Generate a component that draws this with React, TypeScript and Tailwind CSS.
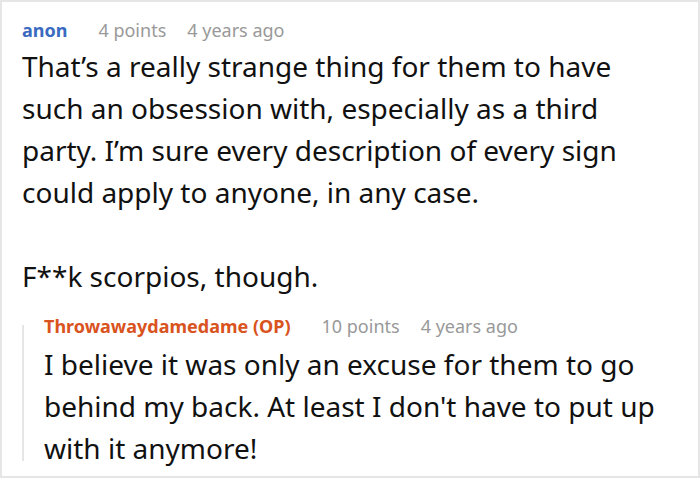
import React from 'react';

const font = {
  fontFamily: '"Noto Sans", "Open Sans", sans-serif',
};

type CommentProps = {
  author: string;
  authorClass: string;
  points: string;
  age: string;
  children: React.ReactNode;
};

const CommentHeader: React.FC<Omit<CommentProps, 'children'>> = ({
  author,
  authorClass,
  points,
  age,
}) => (
  <div className="flex items-baseline text-[18px] leading-[24px]">
    <span className={`font-bold ${authorClass}`}>{author}</span>
    <span className="ml-[31px] text-[#999999]">{points}</span>
    <span className="ml-[21px] text-[#999999]">{age}</span>
  </div>
);

export default function App() {
  return (
    <div
      style={font}
      className="w-[700px] h-[478px] bg-white border-2 border-[#e6e6e6] overflow-hidden"
    >
      <div className="pl-[20px] pt-[16px]">
        <CommentHeader
          author="anon"
          authorClass="text-[#3a6bc1]"
          points="4 points"
          age="4 years ago"
        />

        <div className="mt-[3px] text-[28px] leading-[42px] text-[#111111]">
          <p>
            That’s a really strange thing for them to have
            <br />
            such an obsession with, especially as a third
            <br />
            party. I’m sure every description of every sign
            <br />
            could apply to anyone, in any case.
          </p>
          <p className="mt-[42px]">F**k scorpios, though.</p>
        </div>

        <div className="mt-[17px] flex">
          <div className="w-[2px] mt-[11px] mb-[8px] bg-[#e6e6e6]" />

          <div className="pl-[20px]">
            <CommentHeader
              author="Throwawaydamedame (OP)"
              authorClass="text-[#d9531e]"
              points="10 points"
              age="4 years ago"
            />

            <p className="mt-[5px] text-[28px] leading-[42px] text-[#111111]">
              I believe it was only an excuse for them to go
              <br />
              behind my back. At least I don't have to put up
              <br />
              with it anymore!
            </p>
          </div>
        </div>
      </div>
    </div>
  );
}
